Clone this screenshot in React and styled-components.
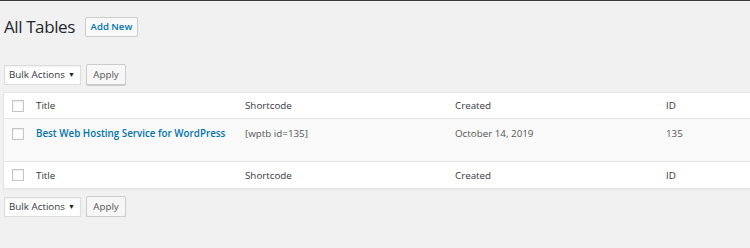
import React from "react";
import styled, { createGlobalStyle } from "styled-components";

const Global = createGlobalStyle`
  html, body { margin: 0; padding: 0; background: #f1f1f1; }
  body {
    font-family: "Open Sans", "Noto Sans", sans-serif;
    color: #444;
    border-top: 1px solid #3a3a3a;
    overflow: hidden;
  }
`;

const Wrap = styled.div`
  padding: 0 0 0 3px;
`;

const TitleBar = styled.div`
  display: flex;
  align-items: center;
  gap: 10px;
  height: 35px;
  padding-top: 8px;
  padding-left: 1px;
`;

const Heading = styled.h1`
  margin: 0;
  font-size: 17px;
  font-weight: 400;
  color: #23282d;
  letter-spacing: -0.4px;
`;

const AddNew = styled.a`
  display: inline-flex;
  align-items: center;
  justify-content: center;
  box-sizing: border-box;
  width: 53px;
  height: 20px;
  border: 1px solid #ccc;
  border-radius: 2px;
  background: #f9f9f9;
  color: #0073aa;
  font-size: 9.6px;
  font-weight: 600;
  text-decoration: none;
  white-space: nowrap;
`;

const Actions = styled.div`
  display: flex;
  align-items: center;
  gap: 5px;
  padding-left: 1px;
  margin-top: ${(p) => p.$top}px;
`;

const Select = styled.div`
  display: flex;
  align-items: center;
  justify-content: space-between;
  box-sizing: border-box;
  width: 77px;
  height: 20px;
  padding: 0 5px 0 4px;
  background: #fff;
  border: 1px solid #ddd;
  box-shadow: inset 0 1px 2px rgba(0, 0, 0, 0.07);
  font-size: 9.8px;
  color: #32373c;
  white-space: nowrap;
`;

const Arrow = styled.span`
  font-size: 7px;
  color: #222;
`;

const Button = styled.div`
  display: flex;
  align-items: center;
  justify-content: center;
  box-sizing: border-box;
  width: 40px;
  height: 21px;
  background: #f7f7f7;
  border: 1px solid #ccc;
  border-radius: 2px;
  box-shadow: 0 1px 0 #ccc;
  font-size: 9.8px;
  color: #555;
`;

const Table = styled.div`
  margin-top: 7px;
  margin-right: -10px;
  background: #fff;
  border: 1px solid #e5e5e5;
  border-right: none;
  box-shadow: 0 1px 1px rgba(0, 0, 0, 0.04);
`;

const Row = styled.div`
  display: grid;
  grid-template-columns: 32px 209px 210px 211px 1fr;
  align-items: ${(p) => (p.$body ? "start" : "center")};
  height: ${(p) => p.$h}px;
  padding-top: ${(p) => p.$pt || 0}px;
  box-sizing: border-box;
  background: ${(p) => (p.$body ? "#f9f9f9" : "#fff")};
  border-top: ${(p) => (p.$bt ? "1px solid #e1e1e1" : "none")};
  border-bottom: ${(p) => (p.$bb ? "1px solid #e1e1e1" : "none")};
`;

const CheckCell = styled.div`
  display: flex;
  padding-left: 8px;
  padding-top: ${(p) => p.$pt || 0}px;
`;

const Check = styled.span`
  width: 10px;
  height: 10px;
  background: #fff;
  border: 1px solid #c3c6c9;
  box-shadow: inset 0 1px 2px rgba(0, 0, 0, 0.08);
`;

const Head = styled.div`
  font-size: 9.8px;
  color: #32373c;
`;

const Cell = styled.div`
  font-size: 9.8px;
  color: #555;
`;

const Link = styled.a`
  font-size: 9.8px;
  font-weight: 600;
  color: #0073aa;
  text-decoration: none;
`;

const columns = ["Title", "Shortcode", "Created", "ID"];

function HeadRow(props) {
  return (
    <Row $h={props.h} $bt={props.bt} $bb={props.bb}>
      <CheckCell>
        <Check />
      </CheckCell>
      {columns.map((c) => (
        <Head key={c}>{c}</Head>
      ))}
    </Row>
  );
}

function BulkBar({ top }) {
  return (
    <Actions $top={top}>
      <Select>
        Bulk Actions <Arrow>▼</Arrow>
      </Select>
      <Button>Apply</Button>
    </Actions>
  );
}

export default function App() {
  return (
    <Wrap>
      <Global />
      <TitleBar>
        <Heading>All Tables</Heading>
        <AddNew href="#">Add New</AddNew>
      </TitleBar>
      <BulkBar top={20} />
      <Table>
        <HeadRow h={26} bb />
        <Row $body $h={42} $pt={8}>
          <CheckCell $pt={1}>
            <Check />
          </CheckCell>
          <Link href="#">Best Web Hosting Service for WordPress</Link>
          <Cell>[wptb id=135]</Cell>
          <Cell>October 14, 2019</Cell>
          <Cell>135</Cell>
        </Row>
        <HeadRow h={27} bt />
      </Table>
      <BulkBar top={7} />
    </Wrap>
  );
}
